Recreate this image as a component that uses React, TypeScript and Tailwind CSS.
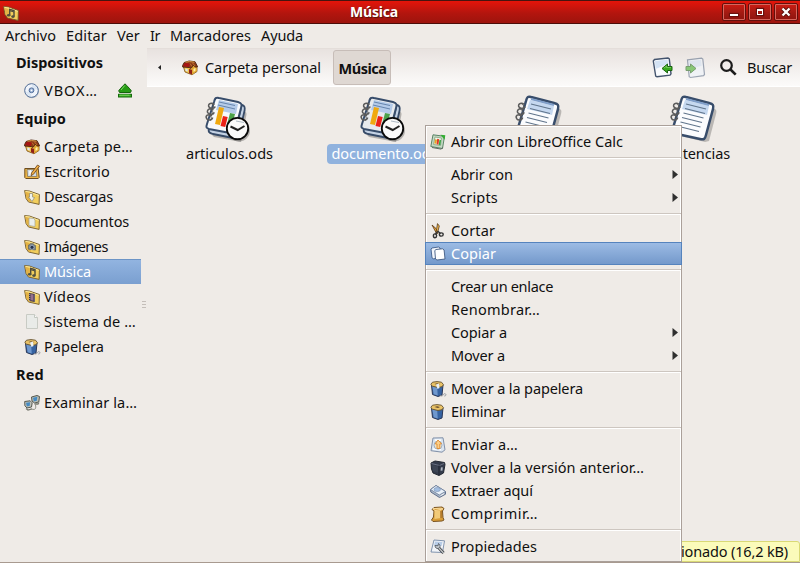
import { useLayoutEffect, useRef, type ReactNode } from "react";

/* Text run whose tracking is computed so that it fills the given width. */
function Fit({ w, children, className = "mb-0.5" }: { w: number; children: string; className?: string }) {
  const ref = useRef<HTMLSpanElement>(null);
  useLayoutEffect(() => {
    const el = ref.current;
    if (!el) return;
    el.style.letterSpacing = "0px";
    const natural = el.getBoundingClientRect().width;
    el.style.letterSpacing = `${(w + 1 - natural) / children.length}px`;
  }, [w, children]);
  return (
    <span ref={ref} className={`inline-block shrink-0 whitespace-pre ${className}`}>
      {children}
    </span>
  );
}

function Svg({ children, size = 16 }: { children: ReactNode; size?: number }) {
  return (
    <svg width={size} height={size} viewBox={`0 0 ${size} ${size}`} className="block shrink-0 overflow-visible" fill="none">
      {children}
    </svg>
  );
}

const House = () => (
  <Svg>
    <path d="M1.5 7 3 12l7 2.8 5-3.3V6L9 4Z" fill="#f0c24b" stroke="#7d5218" strokeWidth=".8" />
    <path d="m10 7 4-3 1 7-5 3.5Z" fill="#e0a632" />
    <path d="m.6 5.5 1.6-3L7 1l6 .7 2.6 5-2.1.5-2-2-2.5 3.2L7 7.5.6 7Z" fill="#8a3a17" stroke="#4c210c" strokeWidth=".9" />
    <path d="m1 6 1.800-3L8 3.600 6.800 7Z" fill="#a81414" />
    <path d="m3.500 2.200 4-.6 5 .6" stroke="#e0a04a" />
    <path d="m8 3.500 2 3M10.500 3l2.500 3" stroke="#c87d33" strokeWidth=".8" />
    <path d="m7 9 3 .7v4.800l-3-1.200Z" fill="#902018" />
    <path d="m3.300 8.600 2.400.5v2.600l-2.200-.9Z" fill="#dce8ef" />
    <path d="m11.500 9 2-1.200v3l-2 1.200Z" fill="#fff1a6" />
  </Svg>
);

const Desk = () => (
  <Svg>
    <path d="M.8 4.500h13.400l1 9-1 1H1.800l-1-1Z" fill="#eeb545" stroke="#6d4d20" />
    <path d="m3 5.500 9 .2.8 6.800H3.600Z" fill="#cfdbe6" stroke="#86775a" strokeWidth=".8" />
    <path d="M6 6.500c1 2-1 3.500 1 4.500" stroke="#fff" strokeWidth="1.800" />
    <path d="m7.500 9 6-8 2 1.200-6 8-2.500 1.500Z" fill="#f0b048" stroke="#684016" strokeWidth=".8" />
  </Svg>
);

function Folder({ kind }: { kind: "down" | "doc" | "img" | "music" | "video" }) {
  return (
    <Svg>
      <path d="M.6 1.600 5.500 2 9 3.300 15.400 5.500l-.3 9.900L4.500 13 2 9.500Z" fill="#f2ce5c" stroke="#71592a" strokeWidth=".9" />
      <path d="M1.200 2.200 5.500 4l1.500 9-2.300-.6L2.500 9Z" fill="#e3b246" />
      <path d="m1.500 2.400 4 .6 3.500 1.300 5.700 2" stroke="#fdeaa0" strokeWidth=".9" />
      {kind === "down" && <path d="M5.500 4.500h3v3.500l2 .5-2.500 4-3.500-4.500h1Z" fill="#edf0ec" stroke="#8b8874" strokeWidth=".7" />}
      {kind === "doc" && <path d="m5 4 5 .5 1 2v6l-6-1Z" fill="#e9eeec" stroke="#a3a495" strokeWidth=".7" />}
      {kind === "img" && (
        <g>
          <path d="m4.500 6 1.500-.5.500-1 3 .3.500 1.200 1.500.5v4.500l-7-.8Z" fill="#7b8790" stroke="#545c60" strokeWidth=".6" />
          <circle cx="8" cy="8.300" r="2" fill="#26334d" stroke="#bfcde0" strokeWidth=".6" />
        </g>
      )}
      {kind === "music" && (
        <g>
          <path d="M6.700 10V4.500l4.300 1V11" stroke="#4d4b3c" strokeWidth="1.400" />
          <path d="M7 5.800 11 7" stroke="#4d4b3c" />
          <ellipse cx="5.700" cy="10.300" rx="1.800" ry="1.300" fill="#51513f" />
          <ellipse cx="10" cy="11.600" rx="1.800" ry="1.300" fill="#51513f" />
        </g>
      )}
      {kind === "video" && (
        <g>
          <path d="m5 4 6 1v8l-6-1Z" fill="#383242" />
          <path d="m6.500 5 3 .4v6.400l-3-.5Z" fill="#96718f" />
          <path d="M5.700 5v7M10.400 5.500V13" stroke="#c9c3bd" strokeWidth=".8" strokeDasharray="1 1" />
        </g>
      )}
    </Svg>
  );
}

const Disc = () => (
  <Svg>
    <circle cx="8" cy="8.300" r="7" fill="#bfc4cb" />
    <circle cx="7.500" cy="7.500" r="6.800" fill="#f0f4fb" stroke="#4c6993" />
    <path d="M7.500 1.500a6 6 0 0 1 5.800 4.600L9 7Zm0 12A6 6 0 0 1 1.700 9L6 8Z" fill="#dbe6f3" />
    <circle cx="7.500" cy="7.300" r="2.400" fill="#9db5d7" stroke="#536f9c" />
    <circle cx="7.500" cy="7.300" r=".9" fill="#fff" />
  </Svg>
);

const Eject = () => (
  <Svg>
    <path d="M8 .8c1.500 1.600 4.500 4.400 6.300 7L13.500 9.500h-11L1.700 7.800C3.500 5.200 6.500 2.400 8 .8Z" fill="#269b14" stroke="#14620c" />
    <path d="M7.800 2.500 4 7" stroke="#7dda65" />
    <rect x="1.500" y="11.300" width="13" height="2.700" fill="#3db425" stroke="#176a0d" />
    <path d="M2.500 12.200h10" stroke="#77d85e" />
  </Svg>
);

const Blank = () => (
  <Svg>
    <path d="M2.500.5h8l3 3v11h-11Z" fill="#e9ebe8" stroke="#c8cbc4" />
    <path d="M10.500.5v3h3" fill="#fafafa" stroke="#c3c7bf" />
  </Svg>
);

function Bin({ paper = true }: { paper?: boolean }) {
  return (
    <Svg>
      <path d="m1.500 4 1 9.500 5.500 2 4-1.500 1-10Z" fill="#3663a2" stroke="#2a3757" />
      <path d="m2.200 5 5 1.500.5 8-4-1.300Z" fill="#6f98ce" />
      <path d="M.8 3.500 2.500 1.200 7 .6l4.500.6 2 2.500-1.500 2L8 6.500 2.500 5.200Z" fill="#e9c267" stroke="#64502d" strokeWidth=".9" />
      <path d="m4.500 3 2.500-.8 3 .8-2 1Z" fill="#61472a" />
      {paper && (
        <g>
          <path d="m6 3.500 3-1 .5 4.500L7.500 8Z" fill="#eaf1f6" />
          <path d="M10 14.500c3 1.500 3-1 4-1.700 2.500-.8 2.500 2.500.3 2.200" stroke="#8d9299" strokeWidth=".9" />
        </g>
      )}
    </Svg>
  );
}

const Network = () => (
  <Svg>
    <path d="m7.500 2 5.500-1.500L15.500 1.500 14.800 7l-4.300 1L8 6Z" fill="#b9bdb5" stroke="#565950" />
    <path d="m9 2.800 4.300-1-.5 4-3 .6Z" fill="#458ac2" />
    <path d="m.7 6.500 5.500-.7 2 2L7.500 12l-4.500 1L.9 10.800Z" fill="#bdc1ba" stroke="#565950" />
    <path d="m2 7.700 4-.5-.2 3.600-3 .7Z" fill="#458ac2" />
    <path d="m2 13.500 2 1.500 4-1.200M10.500 9l3.500 0 1-1.500" stroke="#77796f" strokeWidth="1.300" />
    <path d="M7.500 14c4.500 1.500 4.500-1 4-4" stroke="#929389" />
  </Svg>
);

const Rings = () => (
  <g stroke="#5b5b5b" strokeWidth="1.500" fill="none">
    <path d="M9.500 8.500C5 5.500 2.500 9 4 11s6 1.800 6-.5M8.500 14C4 11 1 15 3 17s6 1.500 6-.8M7 20c-4-3-7 0-5.300 2.700C3.400 25 7.500 24 7.500 21.500" />
    <path d="M6 7.500c2.500.3 4 4.500 1.500 5.500M5 13c2.500.3 4 4.500 1.500 5.500M3.500 19c2.500.3 4 4.500 1.500 5.500" strokeWidth="1" />
  </g>
);

const Ods = ({ dim = false }: { dim?: boolean }) => (
  <Svg size={48}>
    <path d="m12 6 23 5c5 2 5 3 4 7l-5 25-27-5-4-4Z" fill="#000" opacity=".25" transform="translate(2 3)" />
    <path d="M30 7c10 2 11 3 9 10l-5 22c-1 4-2 4-6 3L8 38c-4-1-5-2-4-6L10 9c1-4 2-5 6-4Z" fill="#c4d2e4" stroke="#374b68" strokeWidth="1.800" />
    <path d="m36 12-6 27" stroke="#516783" strokeWidth="1.800" />
    <path d="m14 2 19 4c4 1 4 3 3 6l-6 23c-1 3-2 3-5 2L4 33c-3-1-3-2-2-5l7-22c1-4 2-5 5-4Z" fill={dim ? "#e7eaed" : "#f7f9fc"} stroke="#384d6b" strokeWidth="2" />
    <path d="m14 4 19 4-2 10-20-4Z" fill="#b4cbe9" />
    <path d="m14 6 16 3.500M13 9l17 4" stroke="#6685ad" />
    <Rings />
    <path d="m14 11 5 1-4 17-5-1Z" fill="#f0a910" />
    <path d="m18 20 4.700 1-2.500 10-4.700-1Z" fill="#eb2117" />
    <path d="m25 17 5 1-3.600 14-5-1Z" fill="#4ba149" />
    <circle cx="34" cy="34.500" r="11" fill="#000" opacity=".25" />
    <circle cx="32.500" cy="32.500" r="10.700" fill="#fafafa" stroke="#090909" strokeWidth="1.800" />
    <path d="m25.500 30.500 7.200 3.500L39.500 30" stroke="#222" strokeWidth="2" />
    <path d="M31 25l8 1.500" stroke="#9cabb7" strokeWidth=".8" />
  </Svg>
);

const TextDoc = () => (
  <Svg size={48}>
    <path d="m15 4 25 6c4 1 5 2 4 6l-7 27-4 1-24-6Z" fill="#000" opacity=".22" transform="translate(2 2)" />
    <path d="m16 1 23 6c4 1 5 2 4 6l-7 26c-1 4-2 5-6 4L7 38c-4-1-5-2-4-6l8-27c1-4 2-5 5-4Z" fill="#fbfcfe" stroke="#384d6b" strokeWidth="2.500" />
    <path d="m15 4 24 6-2 9-25-6Z" fill="#c5d8f0" />
    <path d="m16 3 23 6" stroke="#7f9ec9" strokeWidth="2" />
    <path d="m16 8 20 5m-21-.5 20 5m-21.500-.5 20 5m-21.500-.5 20 5m-21.500-.5 20 5m-21.500-.5 20 5" stroke="#60748b" strokeWidth="1.100" />
    <Rings />
  </Svg>
);

const CalcIcon = () => (
  <Svg>
    <path d="m3 .8 11.500 1.500-2 12.200L.8 12.500Z" fill="#c5d9c4" stroke="#5b8467" />
    <path d="m5 3 6.500 1-1 7.500-7-1Z" fill="#f6f7ec" stroke="#8fb08f" />
    <path d="m6 5.500-.7 4.200" stroke="#e7a321" strokeWidth="2" />
    <path d="m8.200 5-.7 5.500" stroke="#df3927" strokeWidth="2" />
    <path d="m10.300 6-.8 5" stroke="#34a542" strokeWidth="1.600" />
    <path d="m10.500.8 4.800.5-.8 4.500Z" fill="#32ad31" />
    <path d="m2 13.500 9 1.600 2-1.600" stroke="#5f6b62" />
  </Svg>
);
const Cut = () => (
  <Svg>
    <path d="m2 2 4 3.500 2 5-2-1Z" fill="#eea736" stroke="#573512" strokeWidth=".8" />
    <path d="m7.500.6-.8 4.900L6 10l2-2 1.300-5Z" fill="#f2b84f" stroke="#563b1b" strokeWidth=".8" />
    <path d="m7.500 8 3 2.500M7 9l-1.500 2.500" stroke="#333" strokeWidth="1.500" />
    <ellipse cx="5" cy="12.800" rx="1.600" ry="1.900" stroke="#333" strokeWidth="1.400" />
    <ellipse cx="11.300" cy="11.500" rx="1.900" ry="1.600" stroke="#333" strokeWidth="1.400" />
  </Svg>
);
const Copy = () => (
  <Svg>
    <path d="m2 2 6.500-1 1.500 1L11 12l-7.500.8-1.500-1L1 3Z" fill="#f3f6fb" stroke="#405c89" strokeWidth=".9" />
    <path d="m6 3.500 6.500-.7 1.600 1.200.9 9-8 1-1.500-1L4.800 4.500Z" fill="#fff" stroke="#415a82" strokeWidth=".9" />
  </Svg>
);
const Send = () => (
  <Svg>
    <path d="m3 1 10-.2 2 12-3 2.400-11-1.500Z" fill="#dbe5f0" stroke="#8190a8" />
    <path d="m5 3 6 .3M3 12l8 .8" stroke="#fff" strokeWidth="1.500" />
    <circle cx="8" cy="8.200" r="4" fill="#f3e3c0" stroke="#9eafc7" />
    <path d="m8 3 3.500 3.700-1.700.3v4.500H7V7l-1.800-.2Z" fill="#fbcf8a" stroke="#e08a2c" strokeWidth=".9" />
  </Svg>
);
const Safe = () => (
  <Svg>
    <path d="m1 3 4-2 9.500 1.500.5 2-1.500 8.500L9 15.500 3 13 1.500 9Z" fill="#343b4b" stroke="#232832" />
    <path d="m1.500 3.500 8 2 4.500-2" stroke="#697082" />
    <path d="M9 5.500V15" stroke="#202632" />
    <path d="m2 5 6 1.500v6L3 11Z" fill="#3d4554" />
    <ellipse cx="11.800" cy="9" rx="1.200" ry="2" fill="#818b9b" />
    <path d="m12 7.500-1 3" stroke="#ddd" strokeWidth=".7" />
  </Svg>
);
const Extract = () => (
  <Svg>
    <path d="M.6 6.500 6 2.500 15.500 8.500v2.700L9.500 14.500.8 9Z" fill="#a8b5c7" stroke="#60708c" />
    <path d="M.6 6.500 6 2.500 15.500 8.500 9.300 12Z" fill="#e9f0f8" stroke="#6d7f9b" strokeWidth=".8" />
    <ellipse cx="7.200" cy="6.500" rx="3.200" ry="2" fill="#a2bee1" stroke="#8299bb" strokeWidth=".7" />
    <path d="m10.500 12.700 3.500-2" stroke="#f4f5f7" />
  </Svg>
);
const Compress = () => (
  <Svg>
    <path d="m4 1.500 8-.5 2 1.500-1.500 2.500.5 6.500L14 14l-2 1-9 .5-1.500-1.500L3.500 11 4 5 2 3.500Z" fill="#d99d38" stroke="#795321" />
    <path d="m4.500 5 6.500-.7v7.700L4.500 13Z" fill="#f2ca78" />
    <path d="m3 2.700 8-.5 2 .8-8 1.500Z" stroke="#fae0a5" strokeWidth=".9" />
    <path d="M11 5v7" stroke="#ab7226" strokeWidth="1.500" />
  </Svg>
);
const Props = () => (
  <Svg>
    <path d="m4 1 10.500.8-2 11.700L1 13Z" fill="#f1f4f8" stroke="#7388a6" strokeWidth=".9" />
    <path d="m5 2.500 7.500.5-1 4-7.500 0Z" fill="#b7cce7" />
    <path d="m8 8 5.500 6" stroke="#3c3f42" strokeWidth="3" />
    <path d="m8 8 5.500 6" stroke="#c3c7ca" strokeWidth="1.300" />
    <path d="M8.500 4.500 8 6.800 5 6.500c0 2.200 1.500 3.500 3.500 2.800 2-.6 2-3.400 0-4.800Z" fill="#c7ced5" stroke="#4b5056" strokeWidth=".8" />
  </Svg>
);

function Row({ icon, text, w, selected = false, eject = false }: { icon: ReactNode; text: string; w: number; selected?: boolean; eject?: boolean }) {
  return (
    <div
      className={`flex h-[25px] items-center gap-1 pl-6 ${
        selected ? "border-t border-[#6c94c6] bg-linear-to-b from-[#92b4e0] to-[#7a9fd0] text-white" : ""
      }`}
    >
      {icon}
      <Fit w={w}>{text}</Fit>
      {eject && <span className="ml-[15px]"><Eject /></span>}
    </div>
  );
}

function Heading({ text, w }: { text: string; w: number }) {
  return (
    <div className="flex h-[31px] items-center pl-4 font-bold">
      <Fit w={w}>{text}</Fit>
    </div>
  );
}

function Item({ icon, text, w, sub = false, active = false }: { icon?: ReactNode; text: string; w: number; sub?: boolean; active?: boolean }) {
  return (
    <div
      className={`flex h-[23px] items-center ${
        active ? "-mx-px border border-[#5583bd] bg-linear-to-b from-[#9cbbe4] to-[#7499cb] pl-1 text-white" : "pl-1"
      }`}
    >
      <span className="mr-[5px] w-4 shrink-0">{icon}</span>
      <Fit w={w}>{text}</Fit>
      {sub && (
        <svg width="6" height="9" viewBox="0 0 6 9" className="mr-[3px] ml-auto">
          <path d="M.5 0v9L6 4.500Z" fill="#2f2f2f" />
        </svg>
      )}
    </div>
  );
}

const Sep = () => (
  <div className="h-2.5 pt-1">
    <div className="h-0.5 border-t border-b border-t-[#cdc6c0] border-b-white" />
  </div>
);

function WinButton({ children }: { children: ReactNode }) {
  return (
    <div className="flex h-[18px] w-[24px] items-center justify-center rounded-[2px] border border-[#62100d] bg-linear-to-b from-[#d01b12] via-[#a51b13] to-[#8f140e] p-0">
      <div className="flex h-4 w-[22px] items-center justify-center rounded-[1px] border border-[#d7675d]">{children}</div>
    </div>
  );
}

function FileCell({ icon, text, w = 0, selected = false }: { icon: ReactNode; text?: string; w?: number; selected?: boolean }) {
  return (
    <div className="flex w-[155px] shrink-0 flex-col items-center">
      <div className="h-12 -translate-x-px">{icon}</div>
      {text && (
        <div className={`flex h-5 items-center rounded px-[5px] ${selected ? "bg-[#90b2de] text-white" : ""}`}>
          <Fit w={w}>{text}</Fit>
        </div>
      )}
    </div>
  );
}

function Nav({ forward = false }: { forward?: boolean }) {
  return (
    <svg width="21" height="22" viewBox="0 0 21 22" fill="none" className={forward ? "opacity-60" : ""}>
      {forward ? (
        <g>
          <path d="m2.500 2.800 14-1.600 1.300.8 1.700 15.500-1 1.200-13 1.800-1.300-.8Z" fill="#eef3fa" stroke="#61718a" strokeWidth="1.200" />
          <path d="m4 4 12-1.300.7 6L4.500 12Z" fill="#d3e1f2" />
          <path d="M1 9.500h4.500V7l5.500 4.500L5.500 16v-2.500H1Z" fill="#42ae28" stroke="#28671c" />
        </g>
      ) : (
        <g>
          <path d="m2.500 2.500 13.500-1.500 1.300.8 1.700 15-1 1.400-13 1.600-1.300-.8L1.300 4Z" fill="#f9fbfe" stroke="#43536d" strokeWidth="1.400" />
          <path d="m3 4 12.500-1.400.7 4.500L3.500 12Z" fill="#d3e2f4" />
          <path d="M20 9.500h-4.500V7L10 11.500l5.500 4.500v-2.500H20Z" fill="#38ab1d" stroke="#1b6410" />
          <path d="m12 11 2.500-2v1.500H19" stroke="#7dcc62" strokeWidth=".8" />
        </g>
      )}
    </svg>
  );
}

export default function App() {
  return (
    <div className="relative flex h-[563px] w-[800px] flex-col overflow-hidden bg-[#efebe7] font-['Noto_Sans','Open_Sans',sans-serif] text-[14.5px] leading-5 text-[#101010]">
      <header className="flex h-6 shrink-0 items-center border-t border-b border-t-[#451510] border-b-[#4b0d09] bg-linear-to-b from-[#e51409] via-[#b3150e] via-55% to-[#9d140d] pr-[2px] pl-[3px] text-white">
        <div className="w-[347px] shrink-0 pt-0.5"><Folder kind="music" /></div>
        <Fit w={47} className="text-[14px] font-bold [text-shadow:1px_1px_1px_#54100c]">Música</Fit>
        <div className="flex flex-1 justify-end gap-[2px]">
          <WinButton><span className="mt-[5px] h-[2px] w-2 bg-white shadow-[0_0_1px_1px_#65110d]" /></WinButton>
          <WinButton><span className="h-[6px] w-[6px] border-[1.5px] border-t-2 border-white shadow-[0_0_1px_1px_#65110d]" /></WinButton>
          <WinButton>
            <svg width="10" height="10" viewBox="0 0 10 10"><path d="m1.500 1.500 7 7m0-7-7 7" stroke="#5a0e0a" strokeWidth="4" /><path d="m1.500 1.500 7 7m0-7-7 7" stroke="#fff" strokeWidth="2.300" /></svg>
          </WinButton>
        </div>
      </header>
      <nav className="flex h-[23px] shrink-0 items-center gap-[10px] pl-[5px]">
        <Fit w={50}>Archivo</Fit>
        <Fit w={40}>Editar</Fit>
        <Fit w={22}>Ver</Fit>
        <Fit w={9}>Ir</Fit>
        <Fit w={80}>Marcadores</Fit>
        <Fit w={41}>Ayuda</Fit>
      </nav>
      <div className="flex min-h-0 flex-1">
        <aside className="w-[141px] shrink-0">
          <Heading text="Dispositivos" w={86} />
          <Row icon={<Disc />} text="VBOX…" w={53} eject />
          <Heading text="Equipo" w={49} />
          <Row icon={<House />} text="Carpeta pe…" w={88} />
          <Row icon={<Desk />} text="Escritorio" w={65} />
          <Row icon={<Folder kind="down" />} text="Descargas" w={68} />
          <Row icon={<Folder kind="doc" />} text="Documentos" w={84} />
          <Row icon={<Folder kind="img" />} text="Imágenes" w={63} />
          <Row icon={<Folder kind="music" />} text="Música" w={46} selected />
          <Row icon={<Folder kind="video" />} text="Vídeos" w={46} />
          <Row icon={<Blank />} text="Sistema de …" w={91} />
          <Row icon={<Bin />} text="Papelera" w={59} />
          <Heading text="Red" w={27} />
          <Row icon={<Network />} text="Examinar la…" w={92} />
        </aside>
        <div className="flex w-[6px] shrink-0 flex-col items-center gap-[2px] pt-[254px]">
          <i className="h-px w-1 bg-[#c4beb9]" />
          <i className="h-px w-1 bg-[#c4beb9]" />
          <i className="h-px w-1 bg-[#c4beb9]" />
        </div>
        <main className="min-w-0 flex-1">
          <div className="mt-px flex h-[39px] items-center border-t border-b border-t-[#e4deda] border-b-white bg-linear-to-b from-[#e8e2df] to-[#fcfbfa] pr-2 pl-[10px]">
            <svg width="4" height="5" viewBox="0 0 4 5"><path d="M4 0v5L1 2.500Z" fill="#222" /></svg>
            <span className="mr-[7px] ml-[21px]"><House /></span>
            <Fit w={115}>Carpeta personal</Fit>
            <div className="ml-[12px] flex h-[35px] w-[58px] items-center justify-center rounded-[3px] border border-[#c7bdb8] bg-[#dfd8d3] pl-px font-bold">
              <Fit w={47} className="mb-0">Música</Fit>
            </div>
            <div className="ml-auto flex items-center">
              <Nav />
              <span className="ml-3"><Nav forward /></span>
              <svg width="17" height="17" viewBox="0 0 17 17" fill="none" className="mr-[10px] ml-[14px]">
                <circle cx="6.500" cy="6.500" r="5.300" stroke="#1c1c1c" strokeWidth="2.200" />
                <path d="m10.500 10.500 5.200 5.200" stroke="#1c1c1c" strokeWidth="2.600" />
              </svg>
              <Fit w={44}>Buscar</Fit>
            </div>
          </div>
          <div className="flex pt-[9px] pl-[5px]">
            <FileCell icon={<Ods />} text="articulos.ods" w={86} />
            <FileCell icon={<Ods dim />} text="documento.ods" w={105} selected />
            <FileCell icon={<TextDoc />} />
            <FileCell icon={<TextDoc />} text="sentencias" w={70} />
          </div>
        </main>
      </div>

      <div className="absolute right-0 bottom-[1px] flex h-[21px] w-[121px] items-center justify-end rounded-tr-[3px] border border-[#d9d976] bg-[#fbfbba] pr-[11px]">
        <Fit w={106}>ionado (16,2 kB)</Fit>
      </div>
      <div className="absolute right-0 bottom-0 left-0 h-px bg-[#a89a90]" />

      <div className="absolute top-[125px] left-[425px] w-[257px] border border-[#aaa09a] bg-[#efebe7] pt-1 pb-[3px] shadow-[inset_1px_1px_0_#fff,inset_-1px_0_0_#fff]">
        <Item icon={<CalcIcon />} text="Abrir con LibreOffice Calc" w={171} />
        <Sep />
        <Item text="Abrir con" w={61} sub />
        <Item text="Scripts" w={46} sub />
        <Sep />
        <Item icon={<Cut />} text="Cortar" w={43} />
        <Item icon={<Copy />} text="Copiar" w={44} active />
        <Sep />
        <Item text="Crear un enlace" w={101} />
        <Item text="Renombrar…" w={88} />
        <Item text="Copiar a" w={55} sub />
        <Item text="Mover a" w={53} sub />
        <Sep />
        <Item icon={<Bin />} text="Mover a la papelera" w={131} />
        <Item icon={<Bin paper={false} />} text="Eliminar" w={54} />
        <Sep />
        <Item icon={<Send />} text="Enviar a…" w={66} />
        <Item icon={<Safe />} text="Volver a la versión anterior…" w={192} />
        <Item icon={<Extract />} text="Extraer aquí" w={81} />
        <Item icon={<Compress />} text="Comprimir…" w={86} />
        <Sep />
        <Item icon={<Props />} text="Propiedades" w={85} />
      </div>
    </div>
  );
}
